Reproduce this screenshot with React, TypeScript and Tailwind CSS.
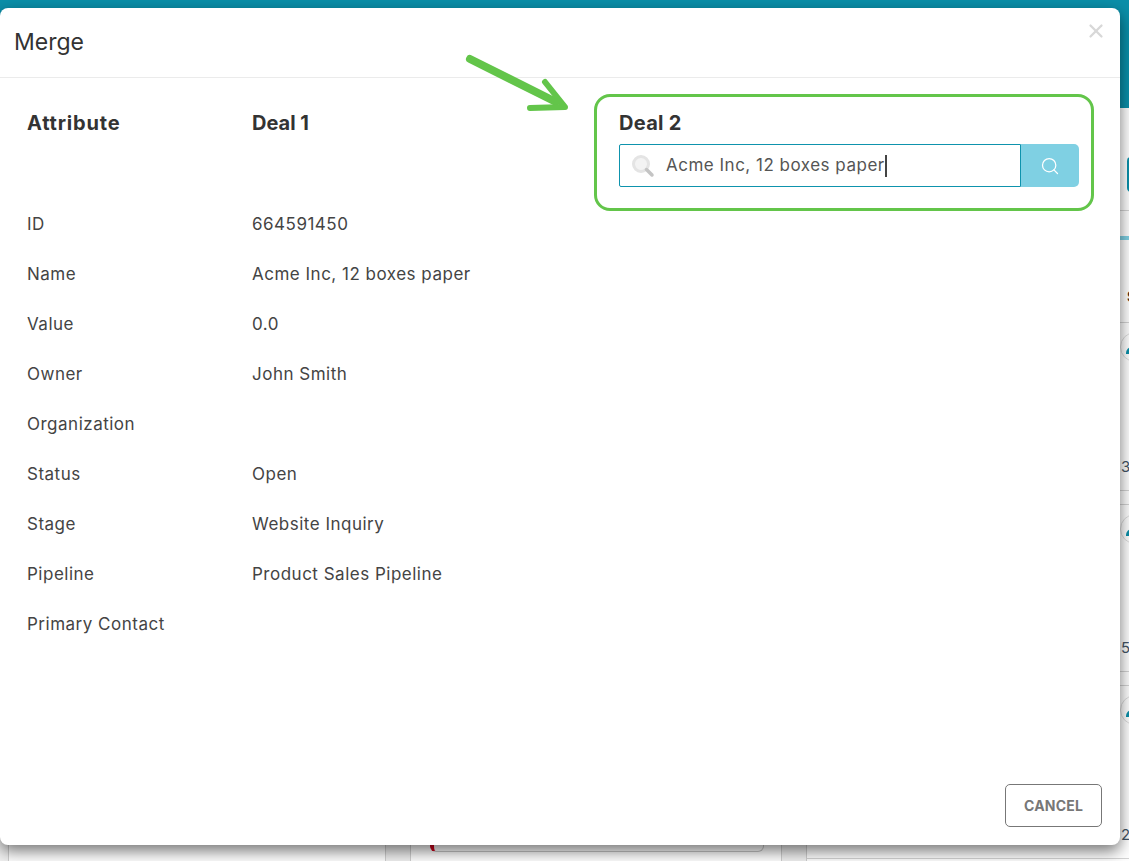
import { Search, X } from 'lucide-react'

const rows = [
  ['ID', '664591450'],
  ['Name', 'Acme Inc, 12 boxes paper'],
  ['Value', '0.0'],
  ['Owner', 'John Smith'],
  ['Organization', ''],
  ['Status', 'Open'],
  ['Stage', 'Website Inquiry'],
  ['Pipeline', 'Product Sales Pipeline'],
  ['Primary Contact', ''],
]

function DealRow({ digit, height }: { digit: string; height: number }) {
  return (
    <div className="flex flex-col border-b border-[#d4d4d4]" style={{ height }}>
      <div className="ml-[313px] mt-[9px] h-[30px] w-[30px] rounded-full border border-[#ddd] bg-white pl-[5px] pt-[14px]">
        <div className="h-[7px] w-[6px] rounded-tl-full bg-[#0a8fa9]" />
      </div>
      <div className="mt-auto mb-[14px] ml-[314px] text-[15px] leading-[18px] text-[#445566]">{digit}</div>
    </div>
  )
}

export default function App() {
  return (
    <div className="relative h-[861px] w-[1129px] overflow-hidden bg-[#f1f1f1] font-['Inter',sans-serif] text-[#333]">
      <div className="h-[108px] bg-[#0a8fa9]" />

      <div className="flex h-[753px] gap-[24px]">
        <div className="ml-[8px] h-full w-[378px] shrink-0 border-x border-[#d0d0d0] bg-white" />

        <div className="relative h-full w-[372px] shrink-0 border-x border-[#d0d0d0] bg-white">
          <div className="absolute left-[19px] top-[700px] h-[44px] w-[334px] rounded-[6px] border border-[#c8c8c8] border-l-[4px] border-l-[#d0021b]" />
        </div>

        <div className="h-full w-[400px] shrink-0 border-l border-[#d0d0d0] bg-white">
          <div className="h-[103px] border-b border-[#d4d4d4] pt-[49px]">
            <div className="ml-[320px] h-[35px] w-[10px] rounded-l-[4px] bg-[#0a8fa9]" />
          </div>
          <div className="mt-[25px] h-[4px] bg-[#7fd0e3]" />
          <div className="flex h-[83px] flex-col justify-end border-b border-[#d4d4d4] pb-[16px]">
            <div className="ml-[320px] text-[14px] font-bold leading-[18px] text-[#3a2a20]">S</div>
          </div>
          <DealRow digit="3" height={168} />
          <div className="h-[14px] border-b border-[#d4d4d4]" />
          <DealRow digit="5" height={167} />
          <div className="h-[14px] border-b border-[#d4d4d4]" />
          <div className="h-[173px]">
            <DealRow digit="2" height={173} />
          </div>
        </div>
      </div>

      <div className="absolute left-0 top-[8px] flex h-[837px] w-[1120px] flex-col rounded-[8px] bg-white shadow-[0_6px_16px_rgba(0,0,0,0.55)]">
        <div className="relative flex h-[70px] shrink-0 items-center border-b border-[#ebebeb] pl-[14px] text-[23px] text-[#333]">
          Merge
          <X className="absolute right-[13px] top-[12px] h-[22px] w-[22px] text-[#d8d8d8]" strokeWidth={2.5} />
        </div>

        <div className="relative flex-1 px-[27px]">
          <svg className="absolute left-[462px] top-[-25px]" width="110" height="60" viewBox="0 0 110 60" fill="none">
            <path d="M8 6 L94 49" stroke="#63c54a" strokeWidth="8" strokeLinecap="round" />
            <path d="M68 55 L103 54 L83 29" stroke="#63c54a" strokeWidth="6" strokeLinecap="round" strokeLinejoin="round" />
          </svg>

          <div className="flex items-start">
            <div className="w-[225px] shrink-0 pt-[34px] text-[20px] font-bold leading-[22px] tracking-[0.8px] text-[#333]">
              Attribute
            </div>
            <div className="w-[342px] shrink-0 pt-[34px] text-[20px] font-bold leading-[22px] text-[#333]">Deal 1</div>
            <div className="mt-[16px] h-[117px] w-[500px] shrink-0 rounded-[16px] border-[3px] border-[#63c54a] pl-[22px] pr-[12px] pt-[15px]">
              <div className="text-[20px] font-bold leading-[22px] tracking-[0.3px] text-[#333]">Deal 2</div>
              <div className="mt-[10px] flex h-[43px]">
                <div className="flex flex-1 items-center rounded-l-[2px] border border-[#0e93ad] pl-[11px]">
                  <svg width="24" height="24" viewBox="0 0 24 24" fill="none">
                    <circle cx="10" cy="10" r="7.5" fill="#f3f3f3" stroke="#e4e4e4" strokeWidth="3" />
                    <path d="M15.5 15.5 L21 21" stroke="#c4c4c4" strokeWidth="3.5" strokeLinecap="round" />
                  </svg>
                  <span className="ml-[11px] text-[17px] tracking-[0.5px] text-[#555]">Acme Inc, 12 boxes paper</span>
                  <span className="h-[22px] w-[2px] bg-[#444]" />
                </div>
                <div className="flex w-[58px] items-center justify-center rounded-r-[5px] bg-[#7fd0e3]">
                  <Search className="h-[20px] w-[20px] text-white" strokeWidth={1.5} />
                </div>
              </div>
            </div>
          </div>

          <div className="mt-[-11px] flex flex-col">
            {rows.map(([label, value]) => (
              <div key={label} className="flex h-[50px] items-center text-[17px] tracking-[0.5px] text-[#444]">
                <div className="w-[225px]">{label}</div>
                <div>{value}</div>
              </div>
            ))}
          </div>
        </div>

        <div className="flex justify-end pb-[18px] pr-[18px]">
          <button className="h-[43px] w-[97px] rounded-[5px] border border-[#777] bg-white text-[14px] font-bold tracking-[0.2px] text-[#777]">
            CANCEL
          </button>
        </div>
      </div>
    </div>
  )
}
